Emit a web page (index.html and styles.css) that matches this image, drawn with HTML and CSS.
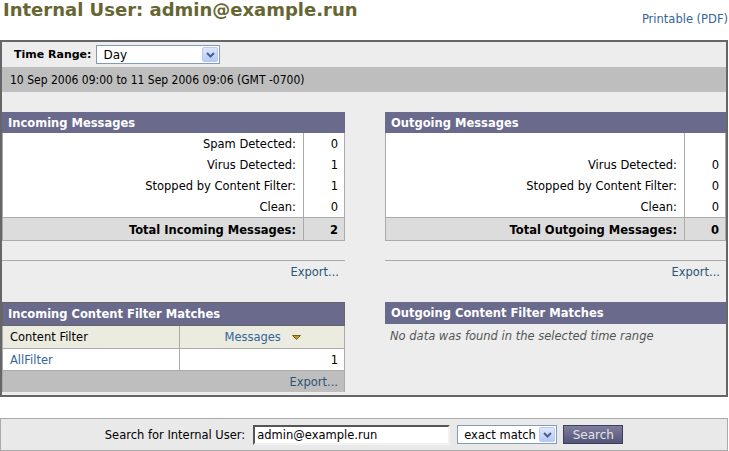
FILE: index.html
```html
<!DOCTYPE html>
<html lang="en">
<head>
    <meta charset="UTF-8">
    <title>Internal User: admin@example.run</title>
    <link rel="stylesheet" href="styles.css">
</head>
<body>
    <!-- 상단 제목 -->
    <div class="top">
        <h1>Internal User: admin@example.run</h1>
        <a class="print" href="#">Printable (PDF)</a>
    </div>

    <!-- 리포트 박스 -->
    <div class="report">
        <div class="range">
            <b>Time Range:</b>
            <span class="sel sel-day">Day
                <i class="arr"><svg width="9" height="6" viewBox="0 0 9 6"><path d="M1 1 L4.5 4.5 L8 1" fill="none" stroke="#4d5f8a" stroke-width="2"/></svg></i>
            </span>
        </div>
        <div class="dates">10 Sep 2006 09:00 to 11 Sep 2006 09:06 (GMT -0700)</div>

        <div class="cols">
            <!-- 왼쪽 -->
            <div class="col">
                <div class="hd">Incoming Messages</div>
                <div class="stat">
                    <span>Spam Detected:</span><span class="n">0</span>
                    <span>Virus Detected:</span><span class="n">1</span>
                    <span>Stopped by Content Filter:</span><span class="n">1</span>
                    <span>Clean:</span><span class="n">0</span>
                    <span class="tot">Total Incoming Messages:</span><span class="n tot">2</span>
                </div>
                <div class="export"><a href="#">Export...</a></div>

                <div class="hd hd-line">Incoming Content Filter Matches</div>
                <div class="cft">
                    <span class="th">Content Filter</span>
                    <span class="th th-r"><a href="#">Messages</a>
                        <svg width="9" height="5" viewBox="0 0 9 5"><path d="M0.5 0.5 L8.5 0.5 L4.5 4.5 Z" fill="#c19a2e" stroke="#7b5c12"/></svg>
                    </span>
                    <span class="td"><a href="#">AllFilter</a></span>
                    <span class="td td-r">1</span>
                    <span class="foot"><a href="#">Export...</a></span>
                </div>
            </div>

            <!-- 오른쪽 -->
            <div class="col">
                <div class="hd">Outgoing Messages</div>
                <div class="stat">
                    <span></span><span class="n"></span>
                    <span>Virus Detected:</span><span class="n">0</span>
                    <span>Stopped by Content Filter:</span><span class="n">0</span>
                    <span>Clean:</span><span class="n">0</span>
                    <span class="tot">Total Outgoing Messages:</span><span class="n tot">0</span>
                </div>
                <div class="export"><a href="#">Export...</a></div>

                <div class="hd hd-out">Outgoing Content Filter Matches</div>
                <p class="nodata">No data was found in the selected time range</p>
            </div>
        </div>
    </div>

    <!-- 검색 -->
    <div class="search">
        <label>Search for Internal User:</label>
        <input class="q" type="text" value="admin@example.run">
        <span class="sel sel-match">exact match
            <i class="arr"><svg width="9" height="6" viewBox="0 0 9 6"><path d="M1 1 L4.5 4.5 L8 1" fill="none" stroke="#4d5f8a" stroke-width="2"/></svg></i>
        </span>
        <button class="btn">Search</button>
    </div>
</body>
</html>
```

FILE: styles.css
```css
body{
    margin: 0;
    width: 728px;
    font-family: "DejaVu Sans", sans-serif;
    font-size: 11.5px;
    color: #000;
}
a{
    color: #336699;
    text-decoration: none;
}

/* 상단 */
.top{
    display: flex;
    justify-content: space-between;
    align-items: flex-start;
    height: 40px;
}
h1{
    margin: 0;
    padding-left: 3px;
    font-size: 18px;
    line-height: 20px;
    color: #666633;
}
.print{
    margin-top: 12px;
}

/* 리포트 박스 */
.report{
    height: 353px;
    border: 2px solid #666;
    background: #ededed;
}
.range{
    display: flex;
    align-items: center;
    gap: 5px;
    height: 25px;
    padding-left: 12px;
}
.range b{
    font-size: 11px;
}
.sel{
    box-sizing: border-box;
    display: flex;
    align-items: center;
    justify-content: space-between;
    height: 19px;
    padding: 0 1px 0 6px;
    border: 1px solid #7f9db9;
    background: #fff;
    font-size: 12px;
}
.sel-day{
    width: 124px;
}
.arr{
    box-sizing: border-box;
    display: flex;
    align-items: center;
    justify-content: center;
    width: 16px;
    height: 15px;
    border: 1px solid #b9c9f0;
    border-radius: 2px;
    background: linear-gradient(#dde7fd, #b6c9f7);
}
/* 숫자가 많은 줄은 폭이 좁은 글꼴로 */
.dates{
    height: 25px;
    line-height: 26px;
    padding-left: 8px;
    background: #bebebe;
    font-family: "DejaVu Sans Condensed", "DejaVu Sans", sans-serif;
    font-size: 12px;
}

.cols{
    display: grid;
    grid-template-columns: 343px 341px;
    column-gap: 40px;
    margin-top: 20px;
}
.hd{
    height: 21px;
    line-height: 22px;
    padding-left: 6px;
    background: #6a6a8c;
    color: #fff;
    font-weight: bold;
}

/* 통계 표 */
.stat{
    display: grid;
    grid-template-columns: 1fr 41px;
    border-left: 1px solid #aaa;
    border-right: 1px solid #aaa;
    background: #fff;
}
.stat span{
    box-sizing: border-box;
    height: 21px;
    padding: 1px 7px 0 0;
    line-height: 21px;
    text-align: right;
}
.stat .n{
    border-left: 1px solid #aaa;
    padding-right: 6px;
}
.stat .tot{
    height: 24px;
    line-height: 22px;
    border-top: 1px solid #aaa;
    border-bottom: 1px solid #aaa;
    background: #dcdcdc;
    font-weight: bold;
}

.export{
    height: 21px;
    line-height: 22px;
    margin: 19px 0 20px;
    padding-right: 6px;
    border-top: 1px solid #aaa;
    text-align: right;
}
.export a{
    color: #2c5577;
}

/* 콘텐츠 필터 */
.hd-line{
    height: 22px;
    line-height: 23px;
    border: 1px solid #666;
    padding-left: 5px;
}
.cft{
    display: grid;
    grid-template-columns: 176px 1fr;
    border-left: 1px solid #aaa;
    border-right: 1px solid #aaa;
}
.cft span{
    padding: 0 6px 0 7px;
}
.th{
    height: 22px;
    line-height: 23px;
    border-bottom: 1px solid #aaa;
    background: #ecebe0;
}
.th-r{
    border-left: 1px solid #aaa;
    text-align: center;
}
.th-r svg{
    margin-left: 7px;
    vertical-align: 1px;
}
.td{
    height: 21px;
    line-height: 22px;
    border-bottom: 1px solid #aaa;
    background: #fff;
}
.td-r{
    border-left: 1px solid #aaa;
    text-align: right;
}
.foot{
    grid-column: 1 / 3;
    height: 21px;
    line-height: 22px;
    background: #bebebe;
    text-align: right;
}
.foot a{
    color: #2c5577;
}
.hd-out{
    height: 22px;
    line-height: 23px;
}
.nodata{
    margin: 0;
    padding: 5px 5px;
    color: #555;
    font-style: italic;
}

/* 검색 */
.search{
    display: flex;
    align-items: center;
    justify-content: center;
    height: 31px;
    margin-top: 21px;
    border: 1px solid #aaa;
    background: #e9e9e9;
}
.search label{
    margin-right: 8px;
}
.q{
    box-sizing: border-box;
    width: 197px;
    height: 20px;
    margin: 0 7px 0 0;
    padding: 0 2px;
    border: 2px solid;
    border-color: #555 #f2f2f2 #f2f2f2 #555;
    font-family: inherit;
    font-size: 11.5px;
}
.sel-match{
    width: 100px;
    margin-right: 6px;
    font-size: 11.5px;
}
.btn{
    height: 19px;
    width: 60px;
    padding: 0;
    border: 1px solid #3e3e5c;
    background: linear-gradient(#7d7d9d, #54547a);
    color: #e4e4e4;
    font-family: inherit;
    font-size: 12px;
}
```
